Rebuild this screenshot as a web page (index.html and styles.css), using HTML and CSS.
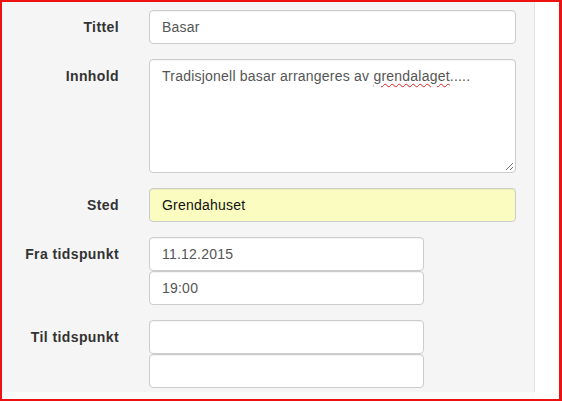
FILE: index.html
```html
<!DOCTYPE html>
<html lang="no">
<head>
<meta charset="utf-8">
<title>Arrangement</title>
<link rel="stylesheet" href="styles.css">
</head>
<body>
<div class="frame">
  <div class="panel">
    <form class="form">
      <label class="label">Tittel</label>
      <div class="field"><input class="input" type="text" value="Basar"></div>

      <label class="label">Innhold</label>
      <div class="field">
        <div class="input textarea">Tradisjonell basar arrangeres av <span class="misspelled">grendalaget</span>.....
          <svg class="grip" width="9" height="9" viewBox="0 0 9 9"><path d="M8 1L1 8M8 5L5 8" stroke="#777" stroke-width="1" fill="none"/></svg>
        </div>
      </div>

      <label class="label">Sted</label>
      <div class="field"><input class="input autofill" type="text" value="Grendahuset"></div>

      <label class="label">Fra tidspunkt</label>
      <div class="field stack">
        <input class="input short" type="text" value="11.12.2015">
        <input class="input short" type="text" value="19:00">
      </div>

      <label class="label">Til tidspunkt</label>
      <div class="field stack">
        <input class="input short" type="text" value="">
        <input class="input short" type="text" value="">
      </div>
    </form>
  </div>
  <div class="side"></div>
</div>
</body>
</html>
```
FILE: styles.css
```css
html, body {
  margin: 0;
  padding: 0;
  background: #ffffff;
}

.frame {
  box-sizing: border-box;
  width: 562px;
  height: 401px;
  border: 2px solid #ee1111;
  border-right-width: 3px;
  display: flex;
  background: #fbfbfb;
  font-family: "Liberation Sans", Arial, Helvetica, sans-serif;
  font-size: 14px;
  color: #333;
}

.panel {
  width: 533px;
  height: 390px;
  box-sizing: border-box;
  background: #f5f5f5;
  border-right: 1px solid #e2e2e2;
  padding: 8px 0 0 0;
}

.side {
  flex: 1;
  background: #ffffff;
}

.form {
  display: grid;
  grid-template-columns: 117px 367px;
  column-gap: 30px;
  row-gap: 15px;
  margin: 0;
}

.label {
  text-align: right;
  font-weight: bold;
  line-height: 20px;
  padding-top: 7px;
  color: #333;
  letter-spacing: 0.4px;
}

.field {
  display: flex;
  flex-direction: column;
}

.input {
  box-sizing: border-box;
  width: 100%;
  height: 34px;
  margin: 0;
  padding: 6px 12px;
  border: 1px solid #cccccc;
  border-radius: 4px;
  background: #ffffff;
  font-family: "Liberation Sans", Arial, Helvetica, sans-serif;
  font-size: 14px;
  line-height: 20px;
  letter-spacing: 0.22px;
  color: #555555;
  box-shadow: inset 0 1px 1px rgba(0, 0, 0, 0.05);
  outline: none;
}

.textarea {
  position: relative;
  height: 114px;
}

.misspelled {
  text-decoration: underline wavy #e02020;
  text-decoration-thickness: 1px;
  text-underline-offset: 2px;
}

.grip {
  position: absolute;
  right: 1px;
  bottom: 1px;
}

.autofill {
  background: #fafcc0;
  color: #111111;
}

.short {
  width: 275px;
}

.stack {
  gap: 0;
}
```
